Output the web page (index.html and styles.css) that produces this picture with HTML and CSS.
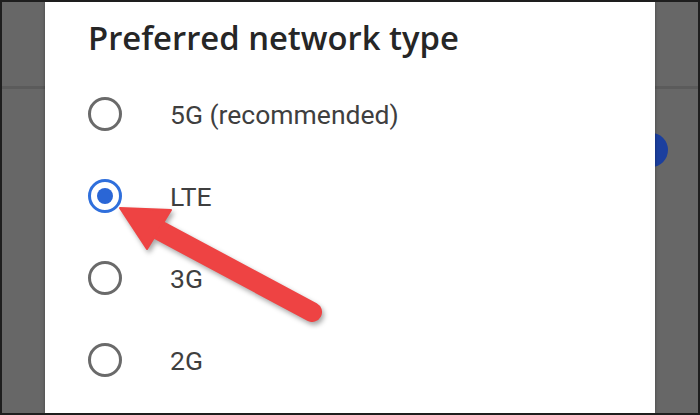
FILE: index.html
```html
<!DOCTYPE html>
<html lang="en">
<head>
<meta charset="utf-8">
<title>Preferred network type</title>
<link rel="stylesheet" href="styles.css">
</head>
<body>
<div class="screen">
  <div class="side"><div class="side-top"></div></div>
  <div class="dialog">
    <h1 class="title">Preferred network type</h1>
    <ul class="options">
      <li class="option"><span class="radio"></span><span class="label">5G (recommended)</span></li>
      <li class="option"><span class="radio radio-checked"></span><span class="label">LTE</span></li>
      <li class="option"><span class="radio"></span><span class="label">3G</span></li>
      <li class="option"><span class="radio"></span><span class="label">2G</span></li>
    </ul>
  </div>
  <div class="side"><div class="side-top"></div></div>
  <span class="knob"></span>
  <svg class="arrow" viewBox="0 0 700 415" width="700" height="415" aria-hidden="true">
    <g class="arrow-shape">
      <line x1="155" y1="228" x2="312" y2="312" stroke="#ee4343" stroke-width="20" stroke-linecap="round"/>
      <polygon points="120,208 171,210 147,249" fill="#ee4343" stroke="#ee4343" stroke-width="2" stroke-linejoin="round"/>
    </g>
  </svg>
</div>
</body>
</html>
```

FILE: styles.css
```css
html, body {
  margin: 0;
  padding: 0;
  background: #666;
}

.screen {
  position: relative;
  width: 700px;
  height: 415px;
  box-sizing: border-box;
  border: 2px solid #1e1e1e;
  background: #666;
  display: grid;
  grid-template-columns: 43px 1fr 43px;
  overflow: hidden;
}

.side {
  background: #676767;
}

.side-top {
  height: 84px;
  border-bottom: 3px solid #5b5b5b;
}

.dialog {
  position: relative;
  z-index: 2;
  background: #fff;
  padding: 16px 0 0 43px;
  box-shadow: 0 0 3px rgba(0, 0, 0, 0.35);
}

.title {
  margin: 0;
  font-family: "Open Sans", "DejaVu Sans", sans-serif;
  font-weight: 600;
  font-size: 32.8px;
  line-height: 40px;
  color: #262626;
  white-space: nowrap;
}

.options {
  list-style: none;
  margin: 15px 0 0 0;
  padding: 0;
}

.option {
  height: 82px;
  display: flex;
  align-items: center;
  gap: 48px;
}

.radio {
  width: 34px;
  height: 34px;
  box-sizing: border-box;
  border: 3px solid #6a6a6a;
  border-radius: 50%;
  display: flex;
  align-items: center;
  justify-content: center;
  flex: none;
}

.radio-checked {
  border-color: #2f6fdc;
}

.radio-checked::after {
  content: "";
  width: 16px;
  height: 16px;
  border-radius: 50%;
  background: #2a66d6;
}

.label {
  font-family: Roboto, "Liberation Sans", sans-serif;
  font-size: 26.5px;
  color: #3f3f3f;
}

.knob {
  position: absolute;
  z-index: 1;
  left: 633px;
  top: 131px;
  width: 33px;
  height: 34px;
  border-radius: 50%;
  background: #1b3f9e;
}

.arrow {
  position: absolute;
  z-index: 3;
  left: -2px;
  top: -2px;
  pointer-events: none;
}

.arrow-shape {
  filter: drop-shadow(2px 3px 2.5px rgba(0, 0, 0, 0.35));
}
```
